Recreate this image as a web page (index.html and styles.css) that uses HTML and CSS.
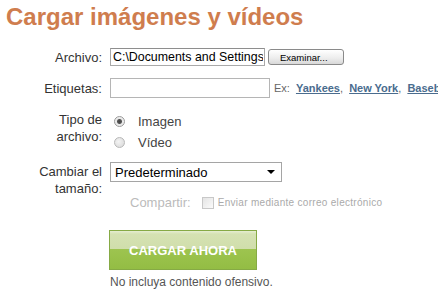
FILE: index.html
```html
<!DOCTYPE html>
<html lang="es">
<head>
    <meta charset="UTF-8">
    <meta name="viewport" content="width=device-width, initial-scale=1.0">
    <title>Cargar imágenes y vídeos</title>
    <link rel="stylesheet" href="styles.css">
</head>
<body>
    <h1 class="title">Cargar imágenes y vídeos</h1>

    <form class="upload">
        <!-- Archivo -->
        <div class="row row-file">
            <label class="label" for="file">Archivo:</label>
            <div class="field">
                <input type="text" id="file" class="text-box file-box" value="C:\Documents and Settings\">
                <button type="button" class="browse">Examinar...</button>
            </div>
        </div>

        <!-- Etiquetas -->
        <div class="row row-tags">
            <label class="label" for="tags">Etiquetas:</label>
            <div class="field">
                <input type="text" id="tags" class="text-box tags-box">
                <span class="hint">Ex: <a href="#">Yankees</a>, <a href="#">New York</a>, <a href="#">Baseball</a></span>
            </div>
        </div>

        <!-- Tipo de archivo -->
        <div class="row row-type">
            <div class="label">Tipo de<br>archivo:</div>
            <div class="options">
                <div class="option"><span class="radio checked"></span>Imagen</div>
                <div class="option"><span class="radio"></span>Vídeo</div>
            </div>
        </div>

        <!-- Cambiar el tamaño -->
        <div class="row row-size">
            <div class="label">Cambiar el<br>tamaño:</div>
            <div class="select">
                <span>Predeterminado</span>
                <span class="arrow"></span>
            </div>
        </div>

        <!-- Compartir -->
        <div class="row row-share">
            <span class="share-label">Compartir:</span>
            <span class="checkbox"></span>
            <span class="share-text">Enviar mediante correo electrónico</span>
        </div>

        <button type="button" class="submit">CARGAR AHORA</button>
        <p class="note">No incluya contenido ofensivo.</p>
    </form>
</body>
</html>
```

FILE: styles.css
```css
html, body {
    overflow: hidden;
}
body {
    margin: 0;
    font-family: "Liberation Sans", Arial, sans-serif;
    font-size: 13px;
    color: #333;
    background-color: #fff;
}
.title {
    margin: 0;
    padding: 3px 0 0 6px;
    font-size: 24px;
    line-height: 28px;
    font-weight: bold;
    color: #cf7d4e;
    white-space: nowrap;
}
.upload {
    margin-top: 17px;
}
.row {
    display: flex;
    align-items: center;
    white-space: nowrap;
}
.label {
    width: 102px;
    margin-right: 8px;
    text-align: right;
    line-height: 17px;
    color: #333;
    flex-shrink: 0;
}
.field {
    display: flex;
    align-items: center;
}

/* Text boxes */
.text-box {
    box-sizing: border-box;
    margin: 0;
    padding: 0 1px 0 2px;
    font-family: inherit;
    font-size: 13px;
    color: #000;
    border: 1px solid #a9a9a9;
    border-top-color: #8e8e8e;
    outline: none;
}
.file-box {
    width: 155px;
    height: 18px;
    font-size: 12.4px;
}
.tags-box {
    width: 160px;
    height: 20px;
    border-color: #b5b5b5;
}
.row-file {
    height: 18px;
}
.browse {
    box-sizing: border-box;
    width: 76px;
    height: 16px;
    margin-left: 3px;
    padding: 0 0 0 2px;
    font-family: inherit;
    font-size: 9.5px;
    text-align: left;
    text-indent: 9px;
    color: #000;
    border: 1px solid #8a8a8a;
    border-radius: 3px;
    background: linear-gradient(#ffffff, #ececec 60%, #d8d8d8);
}
.row-tags {
    margin-top: 12px;
    height: 20px;
}
.hint {
    margin-left: 4px;
    font-size: 11px;
    word-spacing: 3px;
    color: #666;
}
.hint a {
    font-weight: bold;
    word-spacing: 0;
    color: #4a6c8e;
}

/* Radio buttons */
.row-type {
    margin-top: 13px;
    align-items: flex-start;
}
.option {
    display: flex;
    align-items: center;
    height: 21px;
    color: #444;
}
.radio {
    box-sizing: border-box;
    width: 11px;
    height: 11px;
    margin: 0 13px 0 4px;
    border-radius: 50%;
    border: 1px solid #b8b8b8;
    background: radial-gradient(circle at 40% 40%, #f4f4f4, #d6d6d6);
}
.radio.checked {
    border-color: #9a9a9a;
    background: radial-gradient(circle, #444 0, #555 2px, #e8e8e8 3px, #fafafa);
}

/* Select */
.row-size {
    margin-top: 9px;
    align-items: flex-start;
}
.row-size .label {
    padding-top: 1px;
}
.select {
    box-sizing: border-box;
    display: flex;
    align-items: center;
    justify-content: space-between;
    width: 172px;
    height: 20px;
    padding: 0 5px 0 4px;
    color: #000;
    border: 1px solid #a5a5a5;
}
.arrow {
    width: 0;
    height: 0;
    border-left: 4px solid transparent;
    border-right: 4px solid transparent;
    border-top: 4px solid #000;
    margin-right: 1px;
}

/* Compartir */
.row-share {
    height: 13px;
    padding-left: 130px;
    margin-top: -1px;
}
.share-label {
    color: #bbb;
}
.checkbox {
    box-sizing: border-box;
    width: 12px;
    height: 12px;
    margin: 0 4px 0 11px;
    border: 1px solid #c8c8c8;
    background: linear-gradient(135deg, #e4e4e4, #fbfbfb);
}
.share-text {
    font-size: 10px;
    letter-spacing: 0.3px;
    color: #aaa;
}

/* Submit */
.submit {
    display: block;
    box-sizing: border-box;
    width: 148px;
    height: 40px;
    margin: 21px 0 0 109px;
    padding: 0;
    font-family: inherit;
    font-size: 13px;
    font-weight: bold;
    color: #fff;
    border: 1px solid #86aa45;
    background: linear-gradient(#e6eed2 0, #d5e2b3 3px, #d0deab 48%, #9dc44f 48%, #93bd44 100%);
}
.note {
    margin: 5px 0 0 110px;
    font-size: 12px;
    line-height: 14px;
    color: #555;
}
```
